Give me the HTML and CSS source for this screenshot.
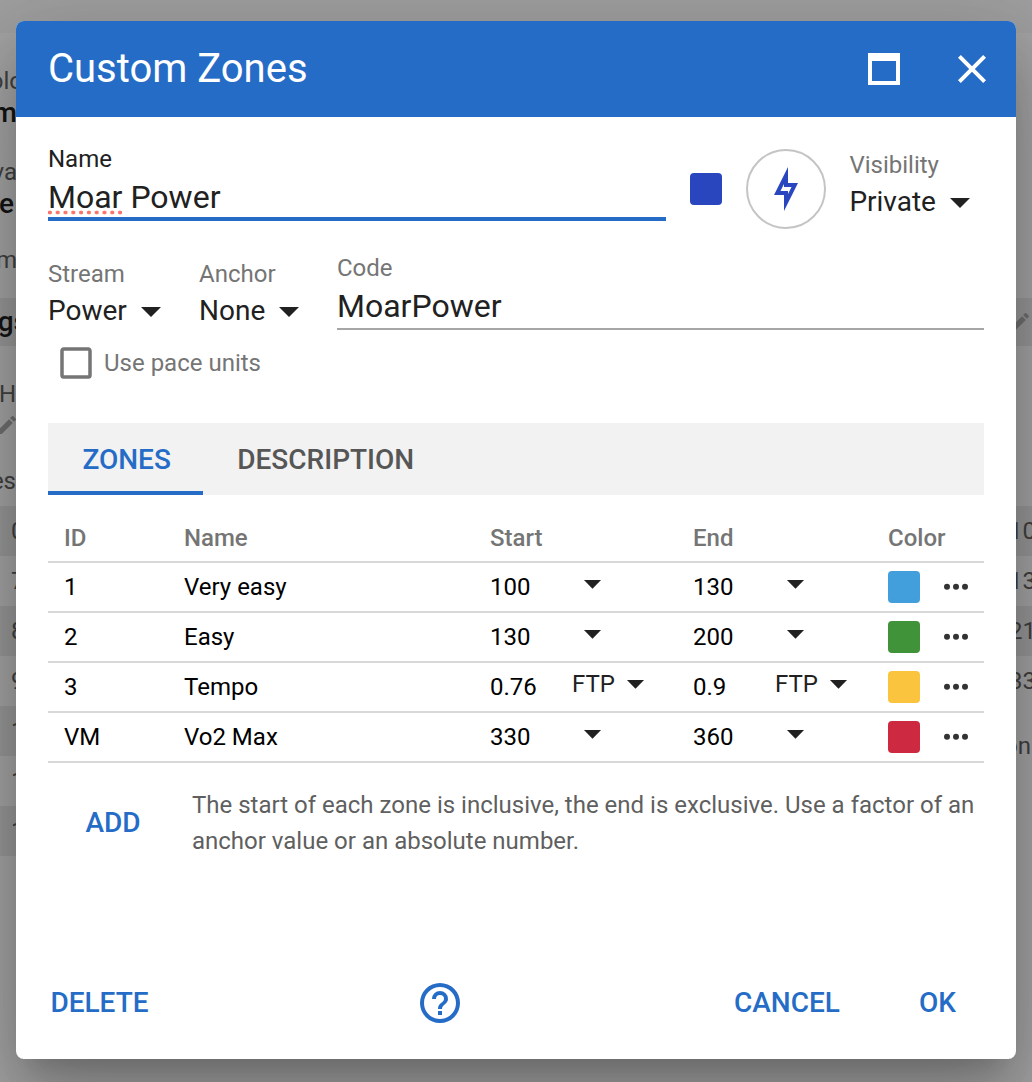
FILE: index.html
```html
<!DOCTYPE html>
<html lang="en">
<head>
    <meta charset="UTF-8">
    <meta name="viewport" content="width=device-width, initial-scale=1.0">
    <title>Custom Zones</title>
    <link rel="stylesheet" href="styles.css">
</head>
<body>
    <svg width="0" height="0" class="defs">
        <symbol id="menu-down" viewBox="0 0 24 24"><path d="M7,10L12,15L17,10H7Z"/></symbol>
        <symbol id="dots" viewBox="0 0 24 24"><circle cx="3" cy="11.7" r="3"/><circle cx="12" cy="11.7" r="3"/><circle cx="21" cy="11.7" r="3"/></symbol>
        <symbol id="pencil" viewBox="0 0 24 24"><path d="M20.71,7.04C21.1,6.65 21.1,6 20.71,5.63L18.37,3.29C18,2.9 17.35,2.9 16.96,3.29L15.12,5.12L18.87,8.87M3,17.25V21H6.75L17.81,9.93L14.06,6.18L3,17.25Z"/></symbol>
    </svg>

    <div class="page">
        <div class="topbar"></div>
        <div class="columns">
            <div class="side left">
                <div class="item first"><span>olo</span><b>m</b></div>
                <div class="item second"><span>va</span><b>e</b></div>
                <div class="item third"><span>m</span></div>
                <div class="band"><b>gs</b></div>
                <div class="item fourth"><span>H</span><svg class="pencil"><use href="#pencil"/></svg></div>
                <div class="item fifth"><span>es</span></div>
                <div class="row">0</div>
                <div class="row">7</div>
                <div class="row">8</div>
                <div class="row">9</div>
                <div class="row">1</div>
                <div class="row">1</div>
                <div class="row">1</div>
            </div>
            <div class="side right">
                <div class="band"><svg class="pencil"><use href="#pencil"/></svg></div>
                <div class="row">10</div>
                <div class="row">13</div>
                <div class="row">21</div>
                <div class="row">33</div>
                <div class="more">on</div>
            </div>
        </div>
    </div>

    <div class="dialog">
        <div class="toolbar">
            <div class="title">Custom Zones</div>
            <svg class="icon" viewBox="0 0 24 24"><path d="M4,4H20V20H4V4M6,8V18H18V8H6Z"/></svg>
            <svg class="icon" viewBox="0 0 24 24"><path d="M19,6.41L17.59,5L12,10.59L6.41,5L5,6.41L10.59,12L5,17.59L6.41,19L12,13.41L17.59,19L19,17.59L13.41,12L19,6.41Z"/></svg>
        </div>

        <div class="content">
            <div class="fields">
                <div class="field name focused">
                    <div class="label">Name</div>
                    <div class="input"><span class="misspelled">Moar</span> Power</div>
                </div>
                <div class="swatch indigo"></div>
                <div class="avatar">
                    <svg class="icon" viewBox="0 0 24 24"><path d="M11 9.47V11H14.76L13 14.53V13H9.24L11 9.47M13 1L6 15H11V23L18 9H13V1Z"/></svg>
                </div>
                <div class="select visibility">
                    <div class="label">Visibility</div>
                    <div class="value">Private<svg class="arrow"><use href="#menu-down"/></svg></div>
                </div>
            </div>

            <div class="fields second-line">
                <div class="select stream">
                    <div class="label">Stream</div>
                    <div class="value">Power<svg class="arrow"><use href="#menu-down"/></svg></div>
                </div>
                <div class="select anchor">
                    <div class="label">Anchor</div>
                    <div class="value">None<svg class="arrow"><use href="#menu-down"/></svg></div>
                </div>
                <div class="field code">
                    <div class="label">Code</div>
                    <div class="input">MoarPower</div>
                </div>
            </div>

            <div class="checkbox">
                <svg viewBox="0 0 24 24"><path d="M19,3H5C3.89,3 3,3.89 3,5V19A2,2 0 0,0 5,21H19A2,2 0 0,0 21,19V5C21,3.89 20.1,3 19,3M19,5V19H5V5H19Z"/></svg>
                <span>Use pace units</span>
            </div>

            <div class="tabs">
                <div class="tab active">ZONES</div>
                <div class="tab">DESCRIPTION</div>
            </div>

            <table class="zones">
                <thead>
                    <tr>
                        <th class="c-id">ID</th>
                        <th class="c-name">Name</th>
                        <th class="c-num">Start</th>
                        <th class="c-unit"></th>
                        <th class="c-num">End</th>
                        <th class="c-end-unit"></th>
                        <th class="c-color">Color</th>
                        <th class="c-menu"></th>
                    </tr>
                </thead>
                <tbody>
                    <tr>
                        <td class="pad">1</td>
                        <td>Very easy</td>
                        <td>100</td>
                        <td><div class="unit"><svg><use href="#menu-down"/></svg></div></td>
                        <td>130</td>
                        <td><div class="unit"><svg><use href="#menu-down"/></svg></div></td>
                        <td><div class="swatch blue"></div></td>
                        <td><svg class="dots"><use href="#dots"/></svg></td>
                    </tr>
                    <tr>
                        <td class="pad">2</td>
                        <td>Easy</td>
                        <td>130</td>
                        <td><div class="unit"><svg><use href="#menu-down"/></svg></div></td>
                        <td>200</td>
                        <td><div class="unit"><svg><use href="#menu-down"/></svg></div></td>
                        <td><div class="swatch green"></div></td>
                        <td><svg class="dots"><use href="#dots"/></svg></td>
                    </tr>
                    <tr>
                        <td class="pad">3</td>
                        <td>Tempo</td>
                        <td>0.76</td>
                        <td><div class="unit">FTP<svg><use href="#menu-down"/></svg></div></td>
                        <td>0.9</td>
                        <td><div class="unit">FTP<svg><use href="#menu-down"/></svg></div></td>
                        <td><div class="swatch yellow"></div></td>
                        <td><svg class="dots"><use href="#dots"/></svg></td>
                    </tr>
                    <tr>
                        <td class="pad">VM</td>
                        <td>Vo2 Max</td>
                        <td>330</td>
                        <td><div class="unit"><svg><use href="#menu-down"/></svg></div></td>
                        <td>360</td>
                        <td><div class="unit"><svg><use href="#menu-down"/></svg></div></td>
                        <td><div class="swatch red"></div></td>
                        <td><svg class="dots"><use href="#dots"/></svg></td>
                    </tr>
                </tbody>
            </table>

            <div class="add-row">
                <div class="btn add">ADD</div>
                <div class="hint">The start of each zone is inclusive, the end is exclusive. Use a factor of an anchor value or an absolute number.</div>
            </div>
        </div>

        <div class="actions">
            <div class="btn delete">DELETE</div>
            <svg class="icon help" viewBox="0 0 24 24"><path d="M11,18H13V16H11V18M12,2A10,10 0 0,0 2,12A10,10 0 0,0 12,22A10,10 0 0,0 22,12A10,10 0 0,0 12,2M12,20C7.59,20 4,16.41 4,12C4,7.59 7.59,4 12,4C16.41,4 20,7.59 20,12C20,16.41 16.41,20 12,20M12,6A4,4 0 0,0 8,10H10A2,2 0 0,1 12,8A2,2 0 0,1 14,10C14,12 11,11.75 11,15H13C13,12.75 16,12.5 16,10A4,4 0 0,0 12,6Z"/></svg>
            <div class="btn cancel">CANCEL</div>
            <div class="btn ok">OK</div>
        </div>
    </div>
</body>
</html>
```
FILE: styles.css
```css
* {
    box-sizing: border-box;
}

body {
    margin: 0;
    height: 1082px;
    overflow: hidden;
    position: relative;
    background-color: #a3a3a3;
    font-family: Roboto, sans-serif;
    font-size: 24px;
    color: #212121;
}

svg {
    display: block;
    fill: currentColor;
    flex-shrink: 0;
}

.defs {
    position: absolute;
}

/* page behind the dialog */
.topbar {
    height: 33px;
    background-color: #9f9f9f;
}

.columns {
    display: flex;
    justify-content: space-between;
}

.side {
    width: 28px;
    overflow: hidden;
    color: #404040;
    line-height: 32px;
}

.side b {
    color: #151515;
    font-size: 28px;
    font-weight: 500;
}

.left .item,
.left .band {
    display: flex;
    flex-direction: column;
    align-items: flex-end;
}

.left .first { height: 91px; padding: 32px 5px 0 0; }
.left .second { height: 92px; padding: 32px 11px 0 0; }
.left .third { height: 82px; padding: 28px 11px 0 0; }
.left .fourth { height: 117px; padding: 32px 12px 0 0; }
.left .fifth { height: 43px; padding: 2px 12px 0 0; }

.left .second b { padding-right: 3px; }
.left .first b { padding-right: 6px; }

.left .pencil { margin: 3px -3px 0 0; }

.band {
    height: 48px;
    padding-top: 8px;
    background-color: #979797;
}

.pencil {
    width: 24px;
    height: 24px;
    color: #6f6f6f;
}

.row {
    height: 50px;
    padding-left: 11px;
    line-height: 50px;
}

.left .row:nth-child(odd),
.right .row:nth-child(even) {
    background-color: #979797;
}

.right {
    padding-top: 265px;
}

.right .band {
    margin-bottom: 160px;
    padding: 12px 0 0 4px;
}

.right .row { padding-left: 5px; }
.right .more { padding: 24px 0 0; }

/* dialog */
.dialog {
    position: absolute;
    top: 21px;
    left: 16px;
    width: 1000px;
    height: 1038px;
    display: flex;
    flex-direction: column;
    overflow: hidden;
    border-radius: 8px;
    background-color: white;
    box-shadow: 0 22px 30px -14px rgba(0,0,0,.2), 0 48px 76px 6px rgba(0,0,0,.14), 0 18px 92px 16px rgba(0,0,0,.12);
}

.toolbar {
    height: 96px;
    padding: 0 20px 0 32px;
    display: flex;
    align-items: center;
    gap: 40px;
    background-color: #256cc7;
    color: white;
}

.title {
    flex: 1;
    padding-bottom: 2px;
    font-size: 40px;
}

.icon {
    width: 48px;
    height: 48px;
}

.content {
    flex: 1;
    padding: 32px 32px 0;
}

.fields {
    display: flex;
    height: 80px;
}

.second-line {
    margin-top: 25px;
}

.label {
    color: #757575;
    line-height: 28px;
}

.input {
    font-size: 32px;
    line-height: 40px;
}

.field {
    border-bottom: 2px solid #a6a6a6;
}

.name {
    width: 618px;
    height: 72px;
    flex-shrink: 0;
    margin-right: 24px;
}

.focused {
    border-bottom: 4px solid #256cc7;
}

.focused .label {
    color: #212121;
    line-height: 20px;
    margin-bottom: 8px;
}

.misspelled {
    display: inline-block;
    background: radial-gradient(circle, #fb7268 1.7px, transparent 2.2px) -2px 33px / 7.8px 5px repeat-x;
}

.swatch {
    width: 32px;
    height: 32px;
    border-radius: 4px;
    flex-shrink: 0;
}

.fields .swatch {
    margin: 24px 24px 0 0;
}

.indigo { background-color: #2946be; }
.blue { background-color: #429fdc; }
.green { background-color: #409338; }
.yellow { background-color: #fbc43e; }
.red { background-color: #cd2a41; }

.avatar {
    width: 80px;
    height: 80px;
    flex-shrink: 0;
    display: flex;
    align-items: center;
    justify-content: center;
    margin-right: 23.4px;
    border: 2px solid #c4c4c4;
    border-radius: 50%;
    color: #2946be;
}

.select {
    padding-top: 2px;
}

.value {
    display: flex;
    align-items: center;
    height: 45px;
    font-size: 28px;
}

.arrow {
    width: 48px;
    height: 48px;
}

.stream { width: 151px; padding-top: 6px; }
.anchor { width: 138px; padding-top: 6px; }

.code {
    flex: 1;
    height: 76px;
}

.code .input { line-height: 49px; }

.checkbox {
    display: flex;
    align-items: center;
    gap: 7px;
    height: 42px;
    margin: 8px 0 0 7px;
    color: #757575;
}

.checkbox svg {
    width: 42px;
    height: 42px;
}

.tabs {
    display: flex;
    height: 72px;
    margin-top: 39px;
    background-color: #f2f2f2;
}

.tab {
    padding: 0 32px 0 34.4px;
    border-bottom: 4px solid transparent;
    font-size: 28px;
    font-weight: 500;
    line-height: 74px;
    color: #565656;
}

.active {
    border-color: #256cc7;
    color: #256cc7;
}

.zones {
    width: 936px;
    margin-top: 16px;
    table-layout: fixed;
    border-collapse: separate;
    border-spacing: 0;
    color: black;
}

.zones th,
.zones td {
    height: 50px;
    padding: 0;
    border-bottom: 2px solid #d8d8d8;
    text-align: left;
    white-space: nowrap;
}

.zones th {
    height: 52px;
    padding-top: 4px;
    font-weight: 500;
    color: #757575;
}

.zones .c-id { width: 136px; padding-left: 16px; }
.zones .pad { padding-left: 16px; }
.c-name { width: 306px; }
.c-num { width: 82px; }
.c-unit { width: 121px; }
.c-end-unit { width: 113px; }
.c-color { width: 56px; }

.unit {
    display: flex;
    align-items: center;
    height: 40px;
    margin-top: -7px;
    color: #212121;
}

.unit svg {
    width: 41px;
    height: 41px;
}

.dots {
    width: 24px;
    height: 24px;
    margin-top: -1px;
    color: #333;
}

.add-row {
    display: flex;
    margin-top: 24px;
}

.btn {
    font-size: 28px;
    font-weight: 500;
    color: #256cc7;
}

.add {
    width: 144px;
    padding-left: 37.5px;
    line-height: 72px;
}

.hint {
    flex: 1;
    line-height: 36px;
    color: #5f5f5f;
}

.actions {
    display: flex;
    align-items: center;
    height: 112px;
    padding: 0 60px 0 34.4px;
    color: #256cc7;
}

.actions .btn { padding-bottom: 2px; }
.delete { width: 365.6px; }
.cancel { margin-left: auto; width: 185px; }
```
